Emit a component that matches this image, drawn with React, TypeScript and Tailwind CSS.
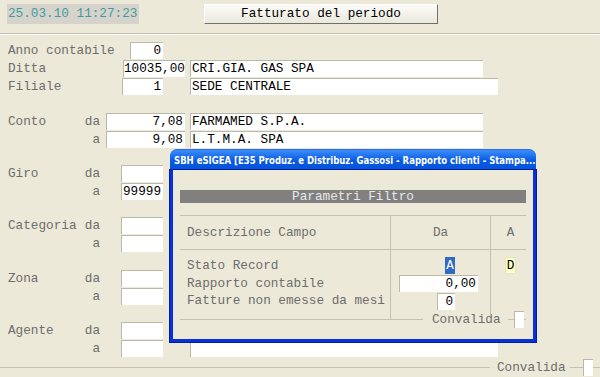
import React from "react";

const mono = { fontFamily: '"Liberation Mono", "Courier New", monospace' };

function Box({ className, value, align = "right" }: { className: string; value?: string; align?: "left" | "right" }) {
  return (
    <div
      className={
        "h-[17px] shrink-0 bg-white border-t border-l border-[#bcb9aa] leading-[16px] text-black whitespace-nowrap overflow-hidden " +
        (align === "right" ? "text-right pr-[2px] " : "text-left pl-[1px] ") +
        className
      }
    >
      {value}
    </div>
  );
}

function Row({
  label,
  sub,
  children,
  className = "",
}: {
  label?: string;
  sub?: string;
  children?: React.ReactNode;
  className?: string;
}) {
  return (
    <div className={"flex h-[18px] items-start " + className}>
      <div className="flex w-[100px] shrink-0 justify-between whitespace-nowrap pl-[8px] leading-[17px] text-[#6d6d6d]">
        <span>{label}</span>
        <span>{sub}</span>
      </div>
      {children}
    </div>
  );
}

function Check({ className = "" }: { className?: string }) {
  return <div className={"h-[17px] w-[10px] shrink-0 bg-white border-t border-l border-[#bcb9aa] " + className} />;
}

function Dialog() {
  return (
    <div className="absolute left-[170px] top-[149px] w-[366px] h-[193px] flex flex-col">
      <div className="h-[21px] shrink-0 rounded-t-[7px] bg-gradient-to-b from-[#3c8ef8] via-[#0a5ce6] to-[#0453d8] border-t border-[#2a6cf0] pl-[4px] pr-[4px] flex items-center overflow-hidden">
        <span
          className="whitespace-nowrap origin-left scale-x-[0.86] text-[11px] font-bold text-white leading-none"
          style={{ fontFamily: '"DejaVu Sans Condensed", "Liberation Sans", sans-serif' }}
        >
          SBH eSIGEA [E35 Produz. e Distribuz. Gassosi - Rapporto clienti - Stampa...
        </span>
      </div>
      <div className="flex-1 bg-[#ece9d8] border-x-[3px] border-b-[3px] border-[#0831d9] shadow-[0_0_0_1px_#001ea0]">
        <div className="mx-[7px] mt-[20px] h-[13px] bg-[#808080] text-center text-[#e8e8e8] leading-[13px]">
          Parametri Filtro
        </div>
        <div className="mx-[7px] mt-[12px] border-t border-[#c4c1b1]">
          <div className="grid grid-cols-[211px_100px_39px] h-[34px] border-b border-[#c4c1b1] text-[#6d6d6d]">
            <div className="border-r border-[#c4c1b1] pl-[7px] leading-[34px]">Descrizione Campo</div>
            <div className="border-r border-[#c4c1b1] text-center leading-[34px]">Da</div>
            <div className="text-center leading-[34px]">A</div>
          </div>
          <div className="grid grid-cols-[211px_100px_39px] h-[69px]">
            <div className="border-r border-[#c4c1b1] pl-[7px] pt-[7px] text-[#6d6d6d] leading-[17.5px]">
              <div>Stato Record</div>
              <div>Rapporto contabile</div>
              <div>Fatture non emesse da mesi</div>
            </div>
            <div className="border-r border-[#c4c1b1] pt-[7px] h-[64px]">
              <div className="h-[17px] flex">
                <span className="ml-[54px] w-[10px] bg-[#316ac5] text-white leading-[17px] text-center">A</span>
              </div>
              <Box className="ml-[8px] mt-px w-[79px]" value="0,00" />
              <Box className="ml-[46px] mt-px w-[18px]" value="0" />
            </div>
            <div className="pt-[7px]">
              <div className="ml-[14px] h-[17px] w-[11px] bg-[#ffffc4] border border-[#e4e2c8] text-black leading-[15px] text-center">D</div>
            </div>
          </div>
          <div className="flex h-[17px] items-center -mt-[8px]">
            <div className="w-[243px] h-px bg-[#c4c1b1]" />
            <span className="ml-[9px] text-[#6d6d6d] leading-[17px]">Convalida</span>
            <div className="ml-[7px] w-[6px] h-px bg-[#c4c1b1]" />
            <Check />
            <div className="flex-1 h-px bg-[#c4c1b1]" />
          </div>
        </div>
      </div>
    </div>
  );
}

export default function App() {
  return (
    <div className="relative w-[600px] h-[377px] overflow-hidden bg-[#ece9d8] text-[12.7px]" style={mono}>
      <div className="flex pt-[4px]">
        <div className="ml-[7px] w-[132px] h-[20px] bg-[#d6d3cc] text-[#3f9c9c] leading-[20px] pl-px whitespace-nowrap">
          25.03.10 11:27:23
        </div>
        <div className="ml-[65px] w-[234px] h-[20px] bg-gradient-to-b from-[#fbfbf8] to-[#ebe8dc] border-t border-l border-white border-r border-b border-r-[#6f6f6f] border-b-[#6f6f6f] text-center leading-[18px] text-black">
          Fatturato del periodo
        </div>
      </div>
      <div className="mt-[9px] border-t border-[#c5c2b2] border-b border-b-white" />

      <div className="mt-[7px]">
        <Row label="Anno contabile">
          <Box className="ml-[30px] w-[33px]" value="0" />
        </Row>
        <Row label="Ditta">
          <Box className="ml-[23px] w-[62px]" value="10035,00" />
          <Box className="ml-[5px] w-[293px]" value="CRI.GIA. GAS SPA" align="left" />
        </Row>
        <Row label="Filiale">
          <Box className="ml-[22px] w-[41px]" value="1" />
          <Box className="ml-[27px] w-[308px]" value="SEDE CENTRALE" align="left" />
        </Row>

        <Row label="Conto" sub="da" className="mt-[17px]">
          <Box className="ml-[6px] w-[79px]" value="7,08" />
          <Box className="ml-[5px] w-[293px]" value="FARMAMED S.P.A." align="left" />
        </Row>
        <Row sub="a">
          <Box className="ml-[6px] w-[79px]" value="9,08" />
          <Box className="ml-[5px] w-[293px]" value="L.T.M.A. SPA" align="left" />
        </Row>

        <Row label="Giro" sub="da" className="mt-[16px]">
          <Box className="ml-[21px] w-[42px]" />
        </Row>
        <Row sub="a">
          <Box className="ml-[21px] w-[42px]" value="99999" />
        </Row>

        <Row label="Categoria" sub="da" className="mt-[16px]">
          <Box className="ml-[21px] w-[42px]" />
        </Row>
        <Row sub="a">
          <Box className="ml-[21px] w-[42px]" />
        </Row>

        <Row label="Zona" sub="da" className="mt-[17px]">
          <Box className="ml-[21px] w-[42px]" />
        </Row>
        <Row sub="a">
          <Box className="ml-[21px] w-[42px]" />
        </Row>

        <Row label="Agente" sub="da" className="mt-[16px]">
          <Box className="ml-[21px] w-[42px]" />
          <Box className="ml-[27px] w-[308px]" />
        </Row>
        <Row sub="a">
          <Box className="ml-[21px] w-[42px]" />
          <Box className="ml-[27px] w-[308px]" />
        </Row>

        <div className="flex h-[18px] items-center">
          <div className="w-[490px] h-px bg-[#c5c2b2]" />
          <span className="ml-[7px] text-[#6d6d6d] leading-[17px]">Convalida</span>
          <div className="ml-[4px] w-[13px] h-px bg-[#c5c2b2]" />
          <Check />
          <div className="flex-1 h-px bg-[#c5c2b2]" />
        </div>
      </div>

      <Dialog />
    </div>
  );
}
